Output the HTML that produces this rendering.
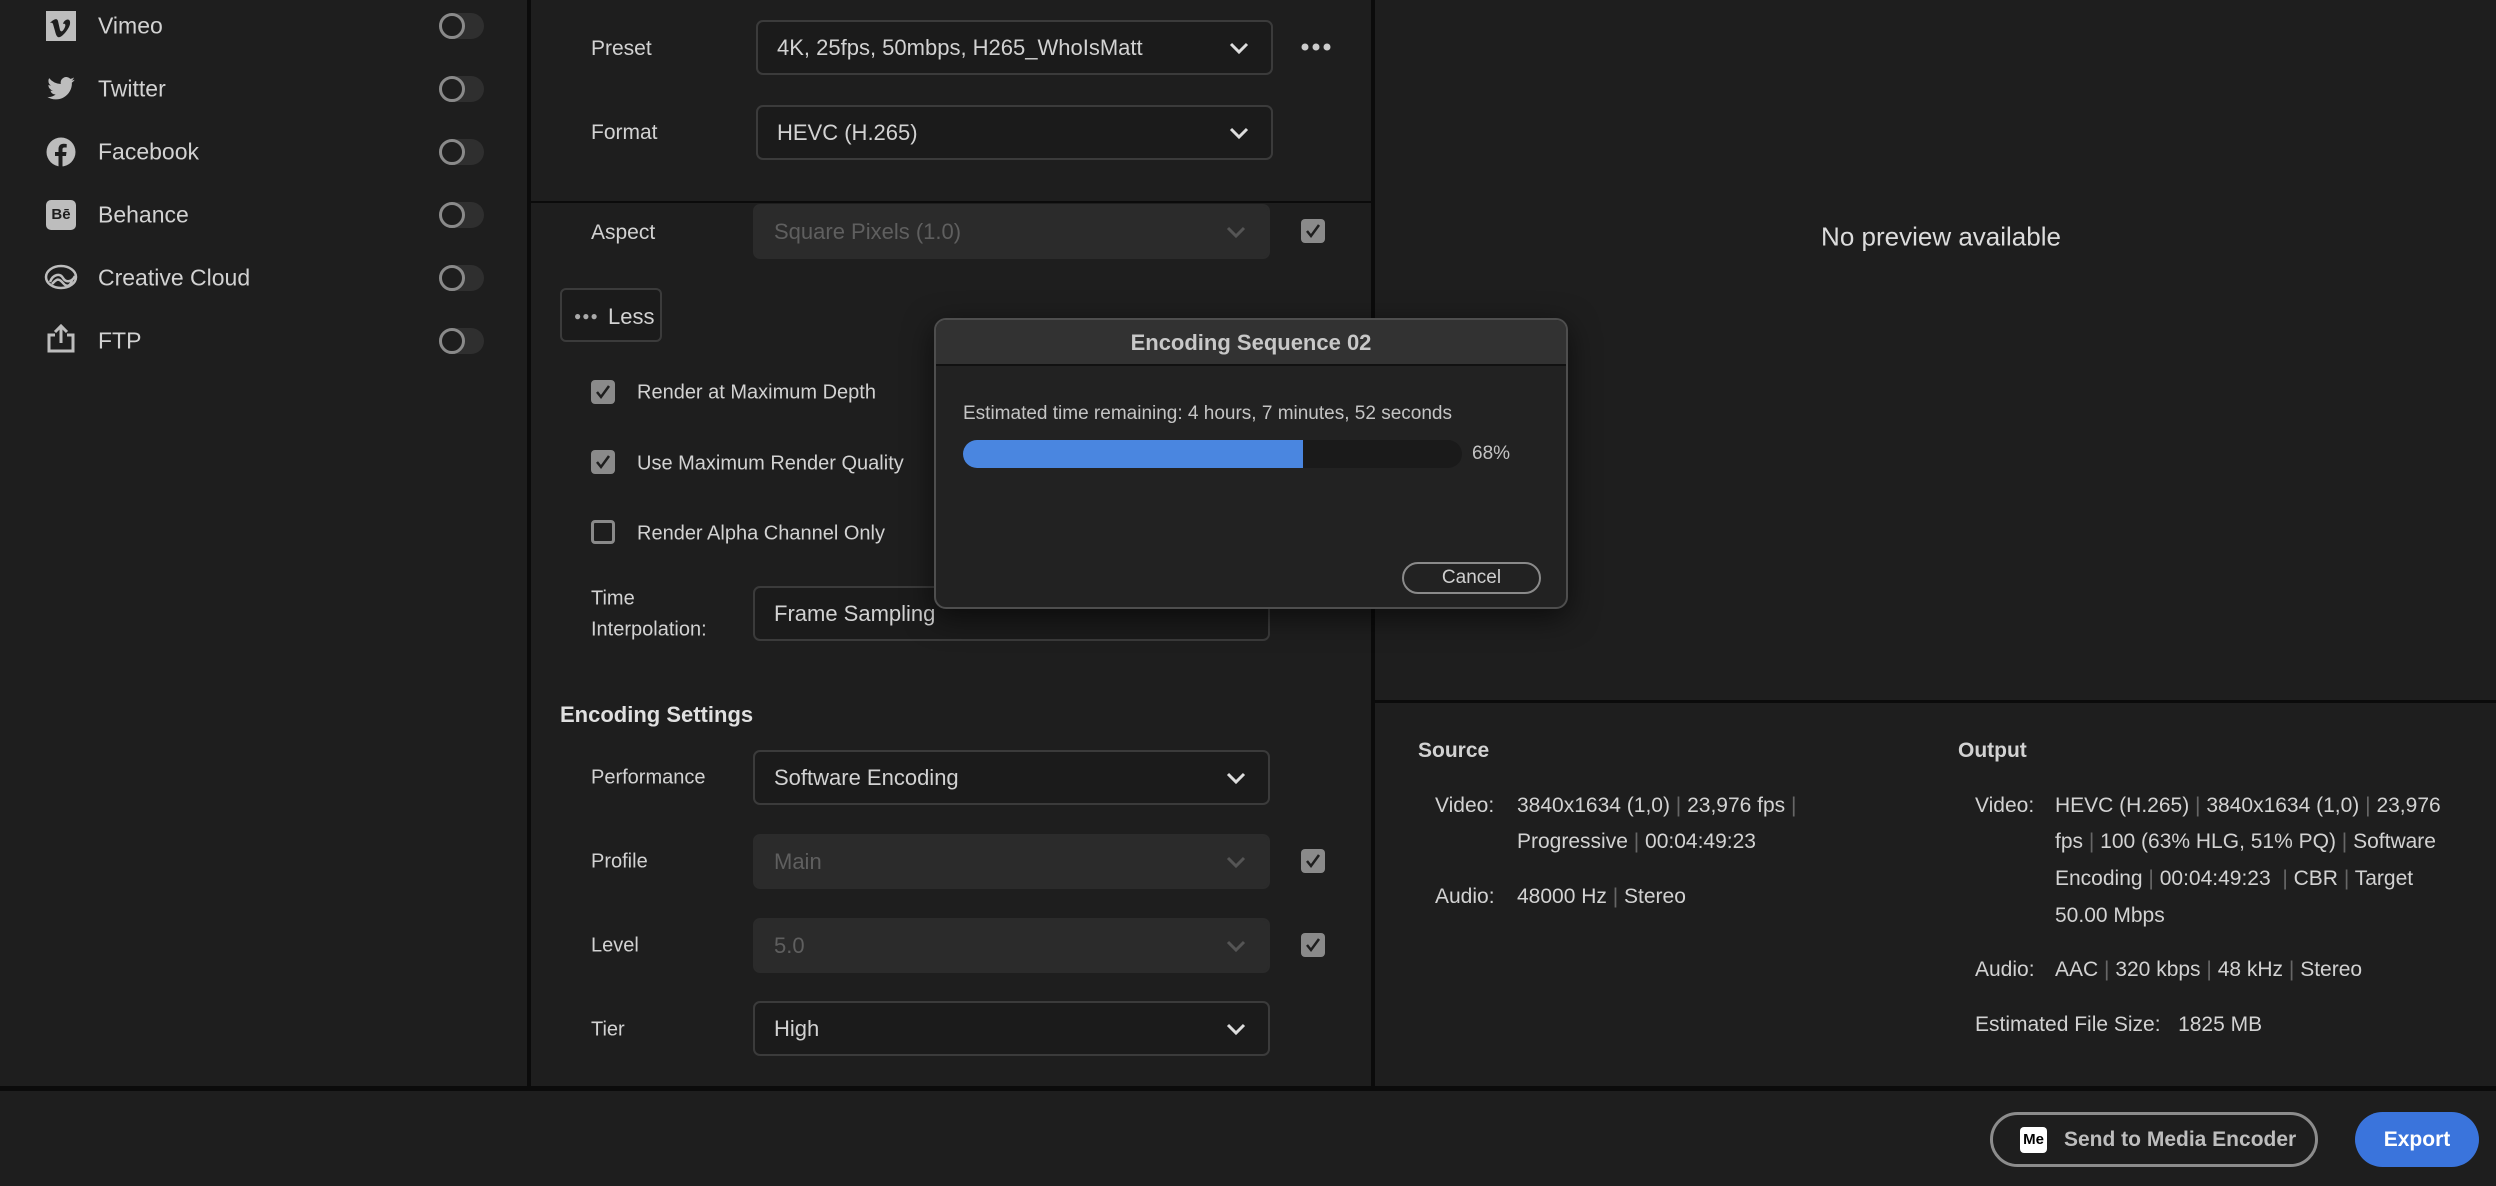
<!DOCTYPE html>
<html><head><meta charset="utf-8"><style>
*,*:before,*:after{box-sizing:border-box;margin:0;padding:0}
body{width:2496px;height:1186px;background:#1e1e1e;font-family:"Liberation Sans",sans-serif;color:#d2d2d2;position:relative;overflow:hidden}
.a{position:absolute}
.t{position:absolute;font-size:22px;white-space:nowrap;transform:translateY(-50%)}
.tog{position:absolute;left:439px;width:45px;height:26px;border-radius:13px;background:#2f2f2f}
.tog:before{content:"";position:absolute;left:0;top:0;width:26px;height:26px;border-radius:50%;border:3px solid #8a8a8a;background:#1e1e1e}
.dd{position:absolute;border:2px solid #3b3b3b;background:#1b1b1b;border-radius:7px;height:55px}
.dd.dis{background:#2b2b2b;border-color:#2b2b2b;color:#5f5f5f}
.dd span{position:absolute;left:19px;top:50%;transform:translateY(-50%);font-size:22px;white-space:nowrap}
.dd svg{position:absolute;right:22px;top:20px}
.cb{position:absolute;width:24px;height:24px;border-radius:4px;background:#8a8a8a}
.cb svg{position:absolute;left:3px;top:3px}
.cb.off{background:transparent;border:3px solid #8a8a8a}
.ic{position:absolute;left:46px;width:30px;height:30px}
</style></head><body>
<div class="a" style="left:527px;top:0;width:4px;height:1090px;background:#0b0b0b"></div>
<div class="a" style="left:1371px;top:0;width:4px;height:1090px;background:#0b0b0b"></div>
<div class="a" style="left:531px;top:201px;width:840px;height:2px;background:#0b0b0b"></div>
<div class="a" style="left:1375px;top:700px;width:1121px;height:3px;background:#0b0b0b"></div>
<div class="a" style="left:0;top:1086px;width:2496px;height:5px;background:#0b0b0b"></div>

<svg class="ic" style="top:11px" viewBox="0 0 30 30"><rect width="30" height="30" fill="#bdbdbd"/><path d="M6 10c3-2 5-3 6 0l2 9c1 2 2 2 4-1 2-3 2-6-1-5 1-5 8-7 7 0-1 5-7 12-10 13-3 1-4-2-5-6l-2-7c-1-2-2-1-3-1z" fill="#1e1e1e"/></svg>
<div class="t" style="left:98px;top:26px;font-size:23px">Vimeo</div>
<svg class="ic" style="top:74px" viewBox="0 0 24 24"><path fill="#bdbdbd" d="M23 4.6a9 9 0 0 1-2.6.7 4.5 4.5 0 0 0 2-2.5 9 9 0 0 1-2.9 1.1 4.5 4.5 0 0 0-7.7 4.1A12.8 12.8 0 0 1 2.5 3.3a4.5 4.5 0 0 0 1.4 6 4.5 4.5 0 0 1-2-.6 4.5 4.5 0 0 0 3.6 4.5 4.5 4.5 0 0 1-2 .1 4.5 4.5 0 0 0 4.2 3.1A9 9 0 0 1 1 18.3a12.8 12.8 0 0 0 19.7-11.4A9 9 0 0 0 23 4.6z"/></svg>
<div class="t" style="left:98px;top:89px;font-size:23px">Twitter</div>
<svg class="ic" style="top:137px" viewBox="0 0 30 30"><circle cx="15" cy="15" r="14.5" fill="#bdbdbd"/><path d="M16.5 30V19h3.5l.5-4h-4v-2.5c0-1.2.4-2 2-2h2.2V7a27 27 0 0 0-3-.2c-3.2 0-5.2 1.9-5.2 5.4V15H9v4h3.5v11z" fill="#1e1e1e"/></svg>
<div class="t" style="left:98px;top:152px;font-size:23px">Facebook</div>
<div class="ic" style="top:200px;background:#bdbdbd;border-radius:5px;color:#1e1e1e;font-weight:bold;font-size:15px;text-align:center;line-height:30px">Bē</div>
<div class="t" style="left:98px;top:215px;font-size:23px">Behance</div>
<svg class="ic" style="top:262px;left:44px;width:34px" viewBox="0 0 34 30"><g fill="none" stroke="#bdbdbd" stroke-width="2.5"><ellipse cx="17" cy="15" rx="15" ry="11"/><path d="M6 20c3-8 10-9 13-4s9 4 12-2M8 22c4-4 6-7 11-1s8 1 9-3"/></g></svg>
<div class="t" style="left:98px;top:278px;font-size:23px">Creative Cloud</div>
<svg class="ic" style="top:323px" viewBox="0 0 30 30"><g fill="none" stroke="#bdbdbd" stroke-width="3"><path d="M9 12H3v16h24V12h-6M15 20V4M9 9l6-6 6 6"/></g></svg>
<div class="t" style="left:98px;top:341px;font-size:23px">FTP</div>
<div class="tog" style="top:13px"></div>
<div class="tog" style="top:76px"></div>
<div class="tog" style="top:139px"></div>
<div class="tog" style="top:202px"></div>
<div class="tog" style="top:265px"></div>
<div class="tog" style="top:328px"></div>

<div class="t" style="left:591px;top:49px;font-size:21px">Preset</div>
<div class="dd" style="left:756px;top:20px;width:517px"><span>4K, 25fps, 50mbps, H265_WhoIsMatt</span><svg width="20" height="13" viewBox="0 0 20 13"><path d="M2 2l8 8 8-8" fill="none" stroke="#ddd" stroke-width="3"/></svg></div>
<svg class="a" style="left:1301px;top:42px" width="30" height="10" viewBox="0 0 30 10"><g fill="#ccc"><circle cx="4" cy="5" r="3.5"/><circle cx="15" cy="5" r="3.5"/><circle cx="26" cy="5" r="3.5"/></g></svg>
<div class="t" style="left:591px;top:133px;font-size:21px">Format</div>
<div class="dd" style="left:756px;top:105px;width:517px"><span>HEVC (H.265)</span><svg width="20" height="13" viewBox="0 0 20 13"><path d="M2 2l8 8 8-8" fill="none" stroke="#ddd" stroke-width="3"/></svg></div>

<div class="t" style="left:591px;top:233px;font-size:21px">Aspect</div>
<div class="dd dis" style="left:753px;top:204px;width:517px"><span>Square Pixels (1.0)</span><svg width="20" height="13" viewBox="0 0 20 13"><path d="M2 2l8 8 8-8" fill="none" stroke="#555" stroke-width="3"/></svg></div>
<div class="cb" style="left:1301px;top:219px"><svg width="18" height="18" viewBox="0 0 18 18"><path d="M3 9l4 5 8-11" fill="none" stroke="#1e1e1e" stroke-width="2.5"/></svg></div>

<div class="a" style="left:560px;top:288px;width:102px;height:54px;border:2px solid #3b3b3b;border-radius:6px;background:#1b1b1b"></div>
<div class="t" style="left:574px;top:316px;font-size:12px;color:#aaa;letter-spacing:1px">●●●</div>
<div class="t" style="left:608px;top:317px;font-size:22px">Less</div>

<div class="cb" style="left:591px;top:380px"><svg width="18" height="18" viewBox="0 0 18 18"><path d="M3 9l4 5 8-11" fill="none" stroke="#1e1e1e" stroke-width="2.5"/></svg></div>
<div class="t" style="left:637px;top:393px;font-size:20px">Render at Maximum Depth</div>
<div class="cb" style="left:591px;top:450px"><svg width="18" height="18" viewBox="0 0 18 18"><path d="M3 9l4 5 8-11" fill="none" stroke="#1e1e1e" stroke-width="2.5"/></svg></div>
<div class="t" style="left:637px;top:464px;font-size:20px">Use Maximum Render Quality</div>
<div class="cb off" style="left:591px;top:520px"></div>
<div class="t" style="left:637px;top:534px;font-size:20px">Render Alpha Channel Only</div>

<div class="t" style="left:591px;top:599px;font-size:20px">Time</div>
<div class="t" style="left:591px;top:630px;font-size:20px">Interpolation:</div>
<div class="dd" style="left:753px;top:586px;width:517px"><span>Frame Sampling</span></div>

<div class="t" style="left:560px;top:715px;font-size:22px;font-weight:bold;color:#e0e0e0">Encoding Settings</div>
<div class="t" style="left:591px;top:778px;font-size:20px">Performance</div>
<div class="dd" style="left:753px;top:750px;width:517px"><span>Software Encoding</span><svg width="20" height="13" viewBox="0 0 20 13"><path d="M2 2l8 8 8-8" fill="none" stroke="#ddd" stroke-width="3"/></svg></div>
<div class="t" style="left:591px;top:862px;font-size:20px">Profile</div>
<div class="dd dis" style="left:753px;top:834px;width:517px"><span>Main</span><svg width="20" height="13" viewBox="0 0 20 13"><path d="M2 2l8 8 8-8" fill="none" stroke="#555" stroke-width="3"/></svg></div>
<div class="cb" style="left:1301px;top:849px"><svg width="18" height="18" viewBox="0 0 18 18"><path d="M3 9l4 5 8-11" fill="none" stroke="#1e1e1e" stroke-width="2.5"/></svg></div>
<div class="t" style="left:591px;top:946px;font-size:20px">Level</div>
<div class="dd dis" style="left:753px;top:918px;width:517px"><span>5.0</span><svg width="20" height="13" viewBox="0 0 20 13"><path d="M2 2l8 8 8-8" fill="none" stroke="#555" stroke-width="3"/></svg></div>
<div class="cb" style="left:1301px;top:933px"><svg width="18" height="18" viewBox="0 0 18 18"><path d="M3 9l4 5 8-11" fill="none" stroke="#1e1e1e" stroke-width="2.5"/></svg></div>
<div class="t" style="left:591px;top:1030px;font-size:20px">Tier</div>
<div class="dd" style="left:753px;top:1001px;width:517px"><span>High</span><svg width="20" height="13" viewBox="0 0 20 13"><path d="M2 2l8 8 8-8" fill="none" stroke="#ddd" stroke-width="3"/></svg></div>

<div class="t" style="left:1941px;top:237px;font-size:26px;transform:translate(-50%,-50%);color:#dcdcdc">No preview available</div>
<div class="t" style="left:1418px;top:751px;font-weight:bold;font-size:21px">Source</div>
<div class="t" style="left:1435px;top:806px;font-size:21px">Video:</div>
<div class="t" style="left:1517px;top:806px;font-size:21px">3840x1634 (1,0) <span style="color:#666">|</span> 23,976 fps <span style="color:#666">|</span></div>
<div class="t" style="left:1517px;top:842px;font-size:21px">Progressive <span style="color:#666">|</span> 00:04:49:23</div>
<div class="t" style="left:1435px;top:897px;font-size:21px">Audio:</div>
<div class="t" style="left:1517px;top:897px;font-size:21px">48000 Hz <span style="color:#666">|</span> Stereo</div>

<div class="t" style="left:1958px;top:751px;font-weight:bold;font-size:21px">Output</div>
<div class="t" style="left:1975px;top:806px;font-size:21px">Video:</div>
<div class="t" style="left:2055px;top:806px;font-size:21px">HEVC (H.265) <span style="color:#666">|</span> 3840x1634 (1,0) <span style="color:#666">|</span> 23,976</div>
<div class="t" style="left:2055px;top:842px;font-size:21px">fps <span style="color:#666">|</span> 100 (63% HLG, 51% PQ) <span style="color:#666">|</span> Software</div>
<div class="t" style="left:2055px;top:879px;font-size:21px">Encoding <span style="color:#666">|</span> 00:04:49:23 &nbsp;<span style="color:#666">|</span> CBR <span style="color:#666">|</span> Target</div>
<div class="t" style="left:2055px;top:916px;font-size:21px">50.00 Mbps</div>
<div class="t" style="left:1975px;top:970px;font-size:21px">Audio:</div>
<div class="t" style="left:2055px;top:970px;font-size:21px">AAC <span style="color:#666">|</span> 320 kbps <span style="color:#666">|</span> 48 kHz <span style="color:#666">|</span> Stereo</div>
<div class="t" style="left:1975px;top:1025px;font-size:21px">Estimated File Size: &nbsp;&nbsp;1825 MB</div>

<div class="a" style="left:934px;top:318px;width:634px;height:291px;border:2px solid #4e4e4e;border-radius:12px;background:#222;overflow:hidden;box-shadow:0 8px 30px rgba(0,0,0,.6)">
  <div class="a" style="left:0;top:0;width:100%;height:46px;background:#323232;border-bottom:2px solid #111"></div>
  <div class="t" style="left:315px;top:23px;transform:translate(-50%,-50%);font-weight:bold;font-size:22px;color:#c8c8c8">Encoding Sequence 02</div>
  <div class="t" style="left:27px;top:94px;font-size:19px;color:#c4c4c4">Estimated time remaining: 4 hours, 7 minutes, 52 seconds</div>
  <div class="a" style="left:27px;top:120px;width:499px;height:28px;border-radius:14px;background:#1a1a1a;overflow:hidden"><div style="width:340px;height:100%;background:#4a86e0"></div></div>
  <div class="t" style="left:536px;top:134px;font-size:19px;color:#c4c4c4">68%</div>
  <div class="a" style="left:466px;top:242px;width:139px;height:32px;border:2px solid #8a8a8a;border-radius:16px;text-align:center;line-height:28px;font-size:19px;color:#cfcfcf">Cancel</div>
</div>

<div class="a" style="left:1990px;top:1112px;width:328px;height:55px;border:3px solid #8c8c8c;border-radius:28px"></div>
<div class="a" style="left:2020px;top:1127px;width:27px;height:26px;background:#fff;border-radius:4px;color:#000;font-size:15px;font-weight:bold;text-align:center;line-height:26px">Me</div>
<div class="t" style="left:2064px;top:1140px;font-size:21px;font-weight:bold;color:#bdbdbd">Send to Media Encoder</div>
<div class="a" style="left:2355px;top:1112px;width:124px;height:55px;background:#3a74dc;border-radius:28px;color:#fff;font-weight:bold;font-size:21px;text-align:center;line-height:55px">Export</div>
</body></html>
